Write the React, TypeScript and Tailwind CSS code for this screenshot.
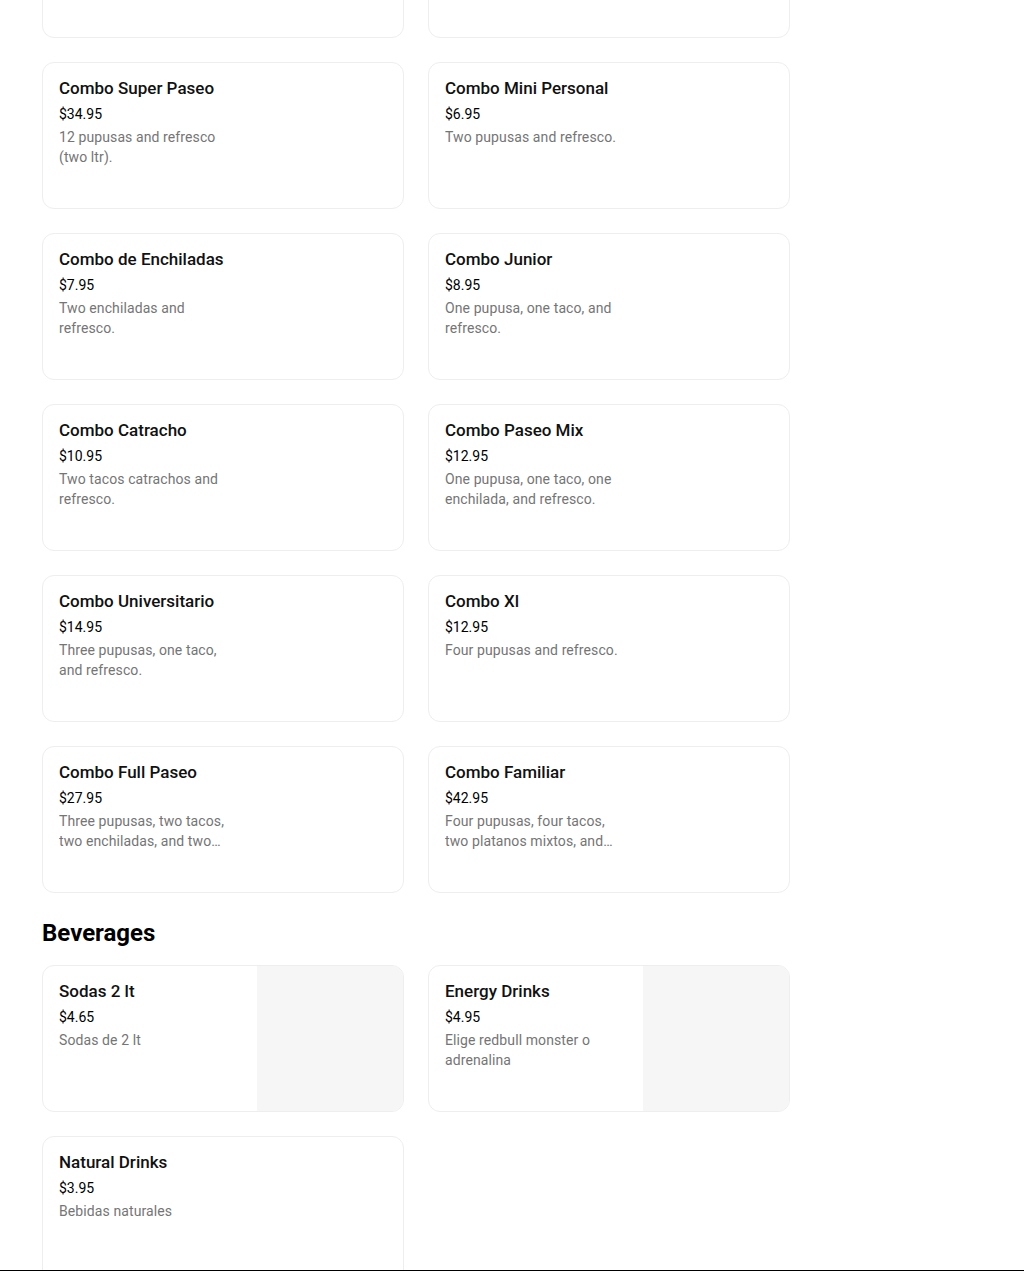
type Item = {
  name?: string
  price?: string
  desc?: string
  image?: boolean
}

const combos: Item[] = [
  {},
  {},
  { name: "Combo Super Paseo", price: "$34.95", desc: "12 pupusas and refresco (two ltr)." },
  { name: "Combo Mini Personal", price: "$6.95", desc: "Two pupusas and refresco." },
  { name: "Combo de Enchiladas", price: "$7.95", desc: "Two enchiladas and refresco." },
  { name: "Combo Junior", price: "$8.95", desc: "One pupusa, one taco, and refresco." },
  { name: "Combo Catracho", price: "$10.95", desc: "Two tacos catrachos and refresco." },
  { name: "Combo Paseo Mix", price: "$12.95", desc: "One pupusa, one taco, one enchilada, and refresco." },
  { name: "Combo Universitario", price: "$14.95", desc: "Three pupusas, one taco, and refresco." },
  { name: "Combo Xl", price: "$12.95", desc: "Four pupusas and refresco." },
  { name: "Combo Full Paseo", price: "$27.95", desc: "Three pupusas, two tacos, two enchiladas, and two refrescos." },
  { name: "Combo Familiar", price: "$42.95", desc: "Four pupusas, four tacos, two platanos mixtos, and refresco." },
]

const beverages: Item[] = [
  { name: "Sodas 2 lt", price: "$4.65", desc: "Sodas de 2 lt", image: true },
  { name: "Energy Drinks", price: "$4.95", desc: "Elige redbull monster o adrenalina", image: true },
  { name: "Natural Drinks", price: "$3.95", desc: "Bebidas naturales" },
]

function MenuCard({ name, price, desc, image }: Item) {
  return (
    <div className="flex h-[147px] overflow-hidden rounded-xl border border-[#eeeeee] bg-white">
      <div className="flex-1 px-4 pt-[15px]">
        {name && (
          <>
            <p className="text-[17px] font-medium leading-5 text-[#111]">{name}</p>
            <p className="mt-[6px] text-sm leading-5 text-black">{price}</p>
            <p className="mt-[3px] line-clamp-2 max-w-[176px] text-sm leading-5 tracking-[0.1px] text-[#757575]">{desc}</p>
          </>
        )}
      </div>
      {image && <div className="w-[146px] bg-[#f6f6f6]"></div>}
    </div>
  )
}

export default function App() {
  return (
    <div className="relative h-[1271px] overflow-hidden bg-white font-['Roboto',sans-serif]">
      <div className="ml-[42px] w-[748px] -mt-[109px]">
        <div className="grid grid-cols-2 gap-6">
          {combos.map((c, i) => (
            <MenuCard key={i} {...c} />
          ))}
        </div>

        <h2 className="mt-6 mb-4 text-2xl font-bold leading-8 text-black">Beverages</h2>
        <div className="grid grid-cols-2 gap-6">
          {beverages.map((b, i) => (
            <MenuCard key={i} {...b} />
          ))}
        </div>
      </div>
      <div className="absolute bottom-0 left-0 h-px w-full bg-black"></div>
    </div>
  )
}
